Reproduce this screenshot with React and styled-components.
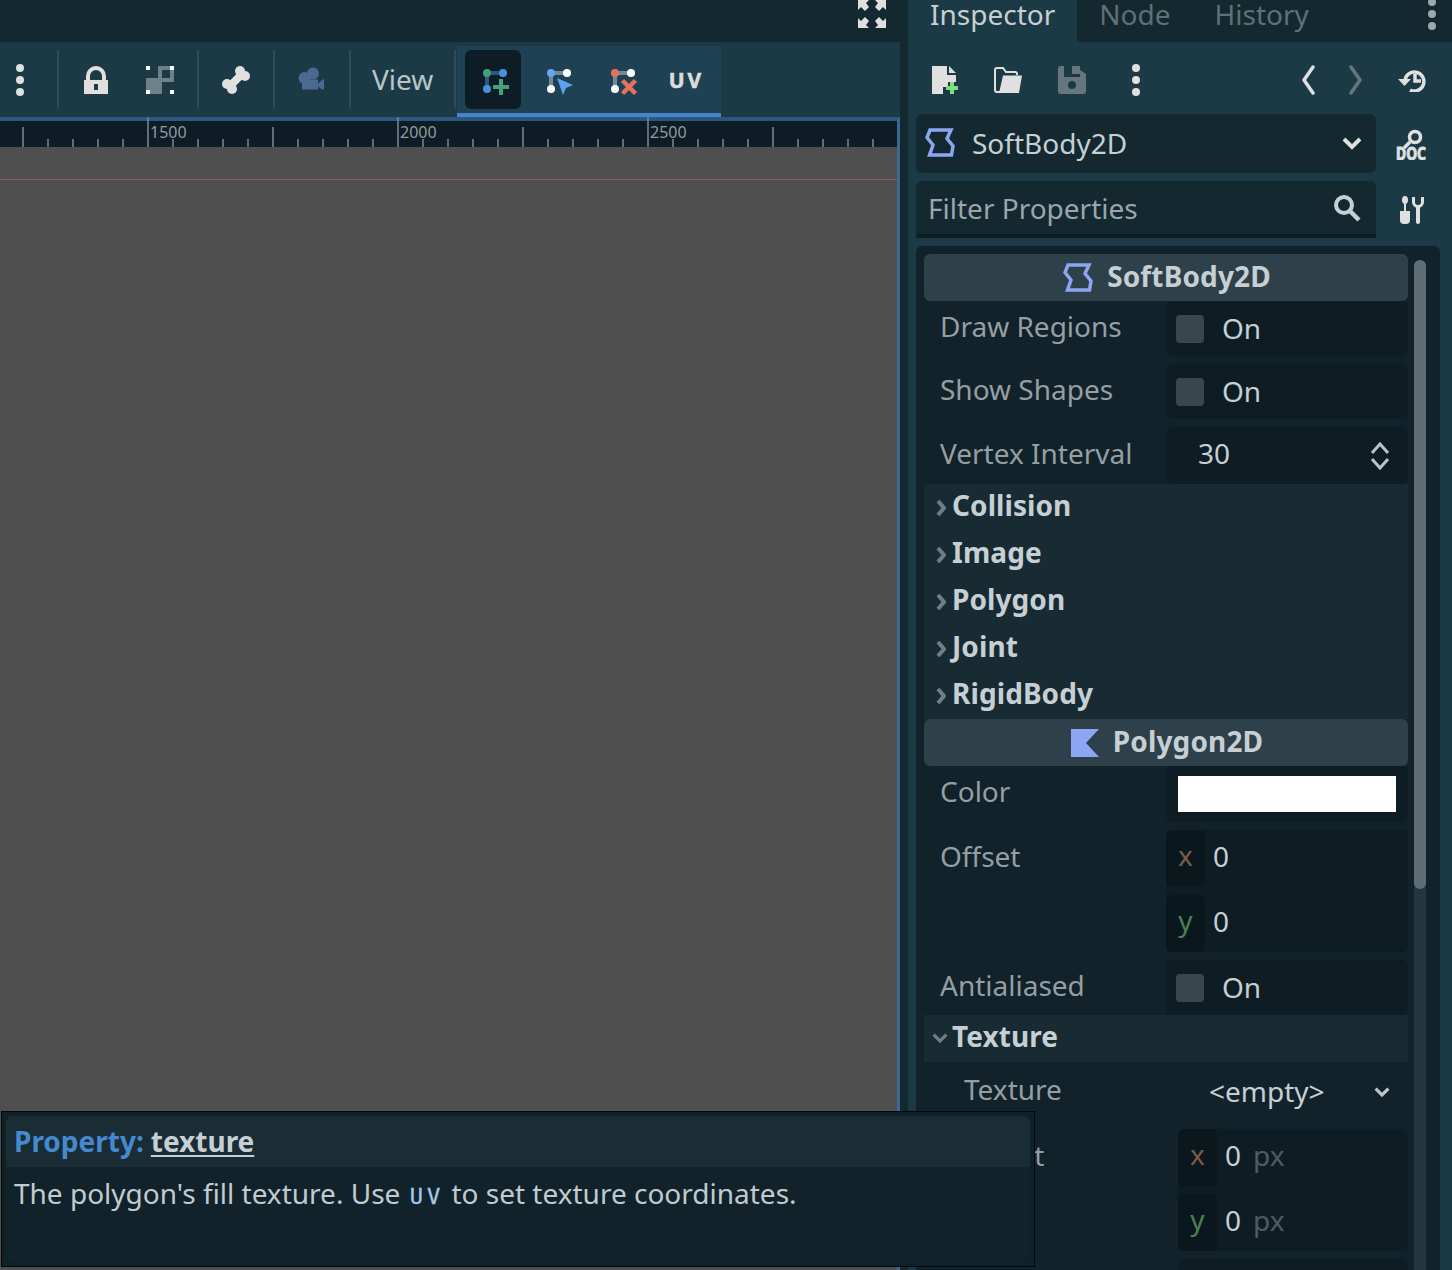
import React from 'react';
import styled, { createGlobalStyle } from 'styled-components';

const GlobalStyle = createGlobalStyle`
    html, body {
        margin: 0;
        padding: 0;
        background: #13282f;
    }
    * {
        box-sizing: border-box;
    }
`;

const Page = styled.div`
    position: relative;
    display: flex;
    width: 1452px;
    height: 1270px;
    overflow: hidden;
    background: #13282f;
    font-family: "Noto Sans", sans-serif;
    font-size: 28px;
    line-height: 1;
    color: #c6d0d4;
`;

/* left side: editor */
const Editor = styled.div`
    display: flex;
    flex-direction: column;
    width: 900px;
    flex-shrink: 0;
`;

const TopBar = styled.div`
    display: flex;
    justify-content: flex-end;
    height: 42px;
    padding-right: 14px;
    overflow: hidden;
`;

const Toolbar = styled.div`
    display: flex;
    align-items: stretch;
    height: 75px;
    background: #1b3a45;
`;

const DotsSlot = styled.div`
    display: flex;
    align-items: center;
    justify-content: center;
    width: 40px;
    margin-right: 12px;
`;

const ToolButton = styled.div`
    display: flex;
    align-items: center;
    justify-content: center;
    width: 64px;
`;

const Sep = styled.div`
    width: 2px;
    margin: 8px 5px 9px;
    background: #2b4c58;
`;

const ViewButton = styled.div`
    display: flex;
    align-items: center;
    padding: 0 16px 2px;
    width: 93px;
    color: #b9c5ca;
`;

const ModeGroup = styled.div`
    display: flex;
    gap: 8px;
    margin: 4px 0 0 -4px;
    padding: 4px 8px;
    width: 264px;
    background: #1e4254;
    border-bottom: 4px solid #4484c8;
`;

const ModeButton = styled.div`
    display: flex;
    align-items: center;
    justify-content: center;
    width: 56px;
    border-radius: 6px;
    background: ${(p) => (p.$active ? '#0e1d25' : 'transparent')};
    padding: 7px 0 0 8px;
`;

const UvLabel = styled.span`
    font-weight: 700;
    font-size: 21px;
    letter-spacing: 3px;
    color: #dcdcdc;
    -webkit-text-stroke: 0.6px #dcdcdc;
    margin: 0 5px 6px 0;
`;

const Viewport = styled.div`
    flex: 1;
    display: flex;
    flex-direction: column;
    border-top: 4px solid #2d5680;
    border-right: 3px solid #3b6792;
`;

const RulerBar = styled.div`
    height: 26px;
    flex-shrink: 0;
    background: #0e1d25;
    svg {
        display: block;
        margin-top: -4px;
    }
`;

const Canvas = styled.div`
    flex: 1;
    padding-top: 32px;
    background: #4f4f4f;
`;

const GuideLine = styled.div`
    height: 1px;
    background: #8d5963;
`;

/* right side: inspector */
const Dock = styled.div`
    display: flex;
    flex-direction: column;
    width: 544px;
    margin-left: 8px;
    background: #1b3a45;
`;

const TabBar = styled.div`
    display: flex;
    align-items: flex-start;
    height: 42px;
    background: #13282f;
`;

const Tab = styled.div`
    height: 42px;
    padding: 0 22px;
    color: ${(p) => (p.$active ? '#c6d0d4' : '#5f7077')};
    background: ${(p) => (p.$active ? '#1b3a45' : 'transparent')};
`;

const TabSpacer = styled.div`
    flex: 1;
`;

const TabMenu = styled.div`
    margin: -2px 16px 0 0;
`;

const IconBar = styled.div`
    display: flex;
    align-items: center;
    height: 72px;
    padding: 4px 0 0 4px;
`;

const IconSlot = styled.div`
    display: flex;
    align-items: center;
    justify-content: center;
    width: ${(p) => p.$w || 64}px;
    margin-left: ${(p) => p.$left || 0}px;
`;

const SearchRow = styled.div`
    display: flex;
    align-items: center;
    height: ${(p) => p.$h}px;
    padding-left: 8px;
    margin-bottom: 8px;
`;

const SearchBox = styled.div`
    display: flex;
    align-items: center;
    justify-content: space-between;
    width: 460px;
    height: 100%;
    padding: 0 ${(p) => p.$pr}px 0 ${(p) => p.$pl}px;
    border-radius: ${(p) => (p.$flat ? '6px 6px 0 0' : '6px')};
    background: #13282f;
    border-bottom: ${(p) => (p.$flat ? '4px solid #0e1e25' : 'none')};
    color: ${(p) => p.$color};
`;

const SelectName = styled.div`
    display: flex;
    align-items: center;
    gap: 17px;
    padding-bottom: 2px;
`;

const SideIcon = styled.div`
    display: flex;
    justify-content: center;
    width: 72px;
    padding-right: ${(p) => p.$pr || 0}px;
`;

const Tree = styled.div`
    display: flex;
    flex: 1;
    gap: 6px;
    margin: 0 12px 0 8px;
    padding: 8px 14px 0 8px;
    border-radius: 6px 6px 0 0;
    background: #11222a;
    overflow: hidden;
`;

const PropList = styled.div`
    display: flex;
    flex-direction: column;
    width: 484px;
    flex-shrink: 0;
`;

const ClassHeader = styled.div`
    display: flex;
    align-items: center;
    justify-content: center;
    gap: 14px;
    height: 47px;
    flex-shrink: 0;
    padding-left: 2px;
    border-radius: 6px;
    background: #2e4049;
    font-weight: 700;
    letter-spacing: 0.15px;
    color: #c6d0d4;
`;

const HeaderText = styled.span`
    margin-bottom: ${(p) => p.$lift}px;
`;

const Group = styled.div`
    display: flex;
    align-items: center;
    gap: ${(p) => (p.$open ? 4 : 6)}px;
    height: 47px;
    flex-shrink: 0;
    padding-left: ${(p) => (p.$open ? 8 : 12)}px;
    background: #182a32;
    font-weight: 700;
    letter-spacing: 0.08px;
    color: #c6d0d4;
`;

const Row = styled.div`
    display: flex;
    flex-shrink: 0;
    margin-bottom: ${(p) => (p.$last ? 0 : 8)}px;
`;

const RowLabel = styled.div`
    width: ${(p) => (p.$sub ? 254 : 242)}px;
    padding: ${(p) => p.$top || 11}px 0 0 ${(p) => (p.$sub ? 40 : 16)}px;
    color: #959fa3;
`;

const ValueBox = styled.div`
    display: flex;
    align-items: center;
    width: ${(p) => (p.$sub ? 230 : 242)}px;
    height: ${(p) => p.$h}px;
    padding-left: ${(p) => p.$pl || 0}px;
    border-radius: 6px;
    background: #0e1d24;
    color: #c6d0d4;
`;

const ValueText = styled.span`
    margin-bottom: ${(p) => p.$lift}px;
`;

const PlainValue = styled.div`
    display: flex;
    align-items: center;
    justify-content: space-between;
    width: 230px;
    height: 59px;
    padding: 0 18px 2px 31px;
    color: #c6d0d4;
    svg {
        margin-top: 4px;
    }
`;

const CheckBox = styled.div`
    width: 28px;
    height: 28px;
    margin-right: 18px;
    border-radius: 4px;
    background: #39474d;
`;

const Spinner = styled.div`
    margin-left: auto;
    margin-right: 18px;
    display: flex;
`;

const Swatch = styled.div`
    width: 218px;
    height: 36px;
    background: #ffffff;
`;

const VecBox = styled.div`
    display: flex;
    flex-direction: column;
    gap: 8px;
    width: ${(p) => (p.$sub ? 230 : 242)}px;
    border-radius: 6px;
    background: #0e1d24;
`;

const VecRow = styled.div`
    display: flex;
    align-items: center;
    height: 57px;
    gap: 8px;
    color: #c6d0d4;
`;

const AxisTag = styled.div`
    display: flex;
    align-items: center;
    justify-content: center;
    width: 39px;
    height: 57px;
    padding-bottom: 8px;
    border-radius: 6px;
    background: #0a171c;
    color: ${(p) => (p.$axis === 'x' ? '#7f5a47' : '#4b8057')};
`;

const Unit = styled.span`
    margin: 0 0 6px 4px;
    color: #4d5c62;
`;

const ScrollTrack = styled.div`
    width: 12px;
    flex-shrink: 0;
    margin-top: 6px;
    border-radius: 6px 6px 0 0;
    background: #22363f;
`;

const ScrollThumb = styled.div`
    height: 629px;
    border-radius: 6px;
    background: #5f6e74;
`;

/* tooltip */
const Tooltip = styled.div`
    position: absolute;
    left: 1px;
    top: 1111px;
    display: flex;
    flex-direction: column;
    width: 1034px;
    height: 156px;
    padding: 4px;
    border: 1px solid #030708;
    background: #0f2128;
`;

const TipHead = styled.div`
    height: 51px;
    padding: 11px 0 0 8px;
    border-radius: 6px 6px 0 0;
    background: #1a2c34;
    font-weight: 700;
`;

const TipProp = styled.span`
    color: #4589cf;
    margin-right: 7px;
`;

const TipName = styled.span`
    color: #c6d0d4;
    text-decoration: underline;
    text-decoration-thickness: 2px;
    text-underline-offset: 3px;
`;

const TipBody = styled.div`
    flex: 1;
    padding: 12px 0 0 8px;
    border-radius: 0 0 6px 6px;
    background: #11222a;
    color: #c0cbd0;
`;

const TipCode = styled.span`
    margin-left: 2px;
    font-family: "DejaVu Sans Mono", monospace;
    font-size: 22px;
    letter-spacing: 4px;
    color: #a3c9ee;
    -webkit-text-stroke: 0.3px #a3c9ee;
`;

const rulerTicks = () => {
    const lines = [];
    for (let i = 0; i < 37; i++) {
        const x = 23 + i * 25;
        let top = 22;
        if (i % 10 === 5) top = 0;
        else if (i % 5 === 0) top = 10;
        lines.push(<line key={i} x1={x} x2={x} y1={top} y2={30} stroke="#7d8a90" strokeWidth="1.5" />);
    }
    return lines;
};

const Ruler = () => (
    <RulerBar>
        <svg width="897" height="30">
            {rulerTicks()}
            {[['1500', 150], ['2000', 400], ['2500', 650]].map(([t, x]) => (
                <text key={t} x={x} y="21" fontSize="16" fill="#8f9ba0" fontFamily="Noto Sans, sans-serif">{t}</text>
            ))}
        </svg>
    </RulerBar>
);

const Dots = ({ color = '#e0e0e0' }) => (
    <svg width="8" height="32" viewBox="0 0 8 32">
        <circle cx="4" cy="4" r="4" fill={color} />
        <circle cx="4" cy="16" r="4" fill={color} />
        <circle cx="4" cy="28" r="4" fill={color} />
    </svg>
);

const LockIcon = () => (
    <svg width="28" height="28" viewBox="0 0 28 28">
        <path d="M6 16v-6a8 8 0 0 1 16 0v6" fill="none" stroke="#e0e0e0" strokeWidth="4" />
        <path d="M2 14h24v14H2z M12 18v6h4v-6z" fill="#e0e0e0" fillRule="evenodd" />
    </svg>
);

const GroupIcon = () => (
    <svg width="28" height="28" viewBox="0 0 28 28">
        <path d="M0 12h16v16H0z" fill="#6f8188" />
        <path d="M12 0h12v4H16v8H12z M24 4h4v12H16v-4h8z" fill="#6f8188" />
        <path d="M0 0h4v4H0z M24 0h4v4h-4z M0 24h4v4H0z M24 24h4v4h-4z" fill="#fff" />
    </svg>
);

const BoneIcon = () => (
    <svg width="28" height="28" viewBox="0 0 28 28" fill="#e0e0e0">
        <path d="M7 21L21 7" stroke="#e0e0e0" strokeWidth="8" />
        <circle cx="18" cy="5" r="5" />
        <circle cx="23" cy="10" r="5" />
        <circle cx="5" cy="18" r="5" />
        <circle cx="10" cy="23" r="5" />
    </svg>
);

const CameraIcon = () => (
    <svg width="28" height="28" viewBox="0 0 28 28" fill="#4a6a93">
        <g transform="translate(-1 1.500)">
            <circle cx="7.500" cy="10.500" r="6" />
            <circle cx="16" cy="6" r="6" />
            <path d="M5 12h16v10H5z" />
            <path d="M21 16l6-5v11h-2l-4-3z" />
        </g>
    </svg>
);

const PointDots = ({ a, b, c, line }) => (
    <>
        <path d="M4 20V4h16" fill="none" stroke={line} strokeWidth="4" />
        <circle cx="4" cy="4" r="4" fill={a} />
        <circle cx="20" cy="4" r="4" fill={b} />
        <circle cx="4" cy="20" r="4" fill={c} />
    </>
);

const AddPointIcon = () => (
    <svg width="28" height="28" viewBox="0 0 28 28">
        <PointDots a="#45a07a" b="#4a90e0" c="#4a90e0" line="#2c5a80" />
        <path d="M10 18h16M18 10v16" stroke="#45a07a" strokeWidth="4" fill="none" />
    </svg>
);

const MovePointIcon = () => (
    <svg width="28" height="28" viewBox="0 0 28 28">
        <PointDots a="#65a5f5" b="#fff" c="#fff" line="#6f8b97" />
        <path d="M10 9l16 7-7 3-3 7z" fill="#5ea0ef" />
    </svg>
);

const RemovePointIcon = () => (
    <svg width="28" height="28" viewBox="0 0 28 28">
        <PointDots a="#e8705f" b="#fff" c="#fff" line="#6f8b97" />
        <path d="M11.500 11.500l13 13M24.500 11.500l-13 13" stroke="#e8705f" strokeWidth="4.500" fill="none" />
    </svg>
);

const FullscreenIcon = () => (
    <svg width="28" height="28" viewBox="0 0 28 28" fill="#e0e0e0">
        <path d="M0 0h11L8 3l3 4-4 4-4-4-3 3z" />
        <path d="M28 0H17l3 3-3 4 4 4 4-4 3 3z" />
        <path d="M0 28h11l-3-3 3-4-4-4-4 4-3-3z" />
        <path d="M28 28H17l3-3-3-4 4-4 4 4 3-3z" />
    </svg>
);

const NewFileIcon = () => (
    <svg width="28" height="28" viewBox="0 0 28 28">
        <g transform="translate(2 0)">
            <path d="M0 0h15v9h9v7h-8v5h-5v7H0z" fill="#e0e0e0" />
            <path d="M17 0l7 7h-7z" fill="#e0e0e0" />
            <path d="M14 22h12M20 16v12" stroke="#7de07e" strokeWidth="4" fill="none" />
        </g>
    </svg>
);

const FolderIcon = () => (
    <svg width="28" height="26" viewBox="0 0 28 26" fill="none">
        <path d="M8 25H3a2 2 0 0 1-2-2V3a2 2 0 0 1 2-2h6l3 4h9a2 2 0 0 1 2 2v1" stroke="#e0e0e0" strokeWidth="2" />
        <path d="M9 8.500h19l-3 17.500H5z" fill="#e0e0e0" />
    </svg>
);

const SaveIcon = () => (
    <svg width="28" height="28" viewBox="0 0 28 28">
        <path d="M3 0h3v11h16V4l6 4v17a3 3 0 0 1-3 3H3a3 3 0 0 1-3-3V3a3 3 0 0 1 3-3z M14 15a4 4 0 1 0 0 8a4 4 0 0 0 0-8z" fill="#66767c" fillRule="evenodd" />
        <path d="M14 0h8v8h-8z" fill="#66767c" />
    </svg>
);

const ChevronIcon = ({ dir, color }) => (
    <svg width="14" height="30" viewBox="0 0 14 30">
        <path d={dir === 'left' ? 'M12 2L3 15l9 13' : 'M2 2l9 13-9 13'} fill="none" stroke={color} strokeWidth="3.500" strokeLinecap="round" strokeLinejoin="round" />
    </svg>
);

const HistoryIcon = () => (
    <svg width="28" height="24" viewBox="0 0 28 24" fill="none">
        <path d="M7 12a9.500 9.500 0 1 1 5 10" stroke="#e0e0e0" strokeWidth="3.500" />
        <path d="M0 11h13l-6.500 7z" fill="#e0e0e0" />
        <path d="M17 6v7h6" stroke="#e0e0e0" strokeWidth="3.500" />
    </svg>
);

const DocIcon = () => (
    <svg width="30" height="32" viewBox="0 0 30 32">
        <circle cx="19" cy="9" r="5.500" fill="none" stroke="#e0e0e0" strokeWidth="3.500" />
        <path d="M14 14l-6 6" stroke="#e0e0e0" strokeWidth="3.500" />
        <text x="0" y="32" fontSize="17" fontWeight="700" fontFamily="Noto Sans, sans-serif" fill="#e0e0e0" stroke="#e0e0e0" strokeWidth="0.9" textLength="30" lengthAdjust="spacingAndGlyphs">DOC</text>
    </svg>
);

const ToolsIcon = () => (
    <svg width="24" height="28" viewBox="0 0 24 28" fill="#e0e0e0">
        <ellipse cx="5" cy="4" rx="3" ry="4" />
        <path d="M4 6h2v9H4z" />
        <path d="M0 15h10v9a4 4 0 0 1-4 4H4a4 4 0 0 1-4-4z" />
        <path d="M13.500 1v5a4.500 4.500 0 0 0 9 0V1" fill="none" stroke="#e0e0e0" strokeWidth="3" />
        <path d="M16 9h4v17a2 2 0 0 1-4 0z" />
    </svg>
);

const SearchIcon = () => (
    <svg width="28" height="28" viewBox="0 0 28 28" fill="none" stroke="#c6d0d4">
        <circle cx="11" cy="11" r="8" strokeWidth="4" />
        <path d="M17 17l9 9" strokeWidth="4.500" />
    </svg>
);

const DownIcon = ({ size = 20, color = '#e0e0e0' }) => (
    <svg width={size} height={size * 0.65} viewBox="0 0 20 13" fill="none">
        <path d="M2 2l8 8 8-8" stroke={color} strokeWidth="4" />
    </svg>
);

const RightIcon = () => (
    <svg width="10" height="16" viewBox="0 0 10 16" fill="none">
        <path d="M2 1l6 7-6 7" stroke="#6f7e84" strokeWidth="4" />
    </svg>
);

const SpinIcon = () => (
    <svg width="20" height="28" viewBox="0 0 20 28" fill="none" stroke="#b9c5ca" strokeWidth="3">
        <path d="M2 11l8-9 8 9" />
        <path d="M2 17l8 9 8-9" />
    </svg>
);

const SoftBodyIcon = () => (
    <svg width="30" height="30" viewBox="0 0 30 30" fill="none">
        <path d="M5 2H26L22 10.500 28 18 26.500 27H4.500L8 17 2 9.500z" stroke="#8da5f3" strokeWidth="3.500" />
    </svg>
);

const PolygonIcon = () => (
    <svg width="28" height="28" viewBox="0 0 28 28">
        <path d="M0 0h28l-13 14 13 14H0z" fill="#8da5f3" />
    </svg>
);

const CheckRow = ({ label, last }) => (
    <Row $last={last}>
        <RowLabel>{label}</RowLabel>
        <ValueBox $h={55} $pl={10}>
            <CheckBox />
            <ValueText $lift={2}>On</ValueText>
        </ValueBox>
    </Row>
);

const GROUPS = ['Collision', 'Image', 'Polygon', 'Joint', 'RigidBody'];

const VectorRow = ({ label, sub, unit }) => (
    <Row>
        <RowLabel $sub={sub} $top={12}>{label}</RowLabel>
        <VecBox $sub={sub}>
            {['x', 'y'].map((axis) => (
                <VecRow key={axis}>
                    <AxisTag $axis={axis}>{axis}</AxisTag>
                    <ValueText $lift={6}>0</ValueText>
                    {unit && <Unit>{unit}</Unit>}
                </VecRow>
            ))}
        </VecBox>
    </Row>
);

const App = () => (
    <Page>
        <GlobalStyle />
        <Editor>
            <TopBar>
                <FullscreenIcon />
            </TopBar>
            <Toolbar>
                <DotsSlot><Dots /></DotsSlot>
                <Sep />
                <ToolButton><LockIcon /></ToolButton>
                <ToolButton><GroupIcon /></ToolButton>
                <Sep />
                <ToolButton><BoneIcon /></ToolButton>
                <Sep />
                <ToolButton><CameraIcon /></ToolButton>
                <Sep />
                <ViewButton>View</ViewButton>
                <Sep />
                <ModeGroup>
                    <ModeButton $active><AddPointIcon /></ModeButton>
                    <ModeButton><MovePointIcon /></ModeButton>
                    <ModeButton><RemovePointIcon /></ModeButton>
                    <ModeButton><UvLabel>UV</UvLabel></ModeButton>
                </ModeGroup>
            </Toolbar>
            <Viewport>
                <Ruler />
                <Canvas><GuideLine /></Canvas>
            </Viewport>
        </Editor>

        <Dock>
            <TabBar>
                <Tab $active>Inspector</Tab>
                <Tab>Node</Tab>
                <Tab>History</Tab>
                <TabSpacer />
                <TabMenu><Dots color="#9ba8ad" /></TabMenu>
            </TabBar>
            <IconBar>
                <IconSlot><NewFileIcon /></IconSlot>
                <IconSlot><FolderIcon /></IconSlot>
                <IconSlot><SaveIcon /></IconSlot>
                <IconSlot><Dots /></IconSlot>
                <IconSlot $w={48} $left={116}><ChevronIcon dir="left" color="#e0e0e0" /></IconSlot>
                <IconSlot $w={48}><ChevronIcon dir="right" color="#66767c" /></IconSlot>
                <IconSlot><HistoryIcon /></IconSlot>
            </IconBar>
            <SearchRow $h={59}>
                <SearchBox $pl={9} $pr={14} $color="#c6d0d4">
                    <SelectName><SoftBodyIcon />SoftBody2D</SelectName>
                    <DownIcon />
                </SearchBox>
                <SideIcon $pr={2}><DocIcon /></SideIcon>
            </SearchRow>
            <SearchRow $h={57}>
                <SearchBox $flat $pl={12} $pr={15} $color="#9aa6ab">
                    <span>Filter Properties</span>
                    <SearchIcon />
                </SearchBox>
                <SideIcon><ToolsIcon /></SideIcon>
            </SearchRow>
            <Tree>
                <PropList>
                    <ClassHeader><SoftBodyIcon /><HeaderText $lift={4}>SoftBody2D</HeaderText></ClassHeader>
                    <CheckRow label="Draw Regions" />
                    <CheckRow label="Show Shapes" />
                    <Row $last>
                        <RowLabel $top={12}>Vertex Interval</RowLabel>
                        <ValueBox $h={57} $pl={32}>
                            <ValueText $lift={5}>30</ValueText>
                            <Spinner><SpinIcon /></Spinner>
                        </ValueBox>
                    </Row>
                    {GROUPS.map((g) => (
                        <Group key={g}><RightIcon /><HeaderText $lift={5}>{g}</HeaderText></Group>
                    ))}
                    <ClassHeader><PolygonIcon /><HeaderText $lift={4}>Polygon2D</HeaderText></ClassHeader>
                    <Row>
                        <RowLabel>Color</RowLabel>
                        <ValueBox $h={56} $pl={12}><Swatch /></ValueBox>
                    </Row>
                    <VectorRow label="Offset" />
                    <CheckRow label="Antialiased" last />
                    <Group $open><DownIcon size={16} color="#6f7e84" /><HeaderText $lift={5}>Texture</HeaderText></Group>
                    <Row>
                        <RowLabel $sub $top={13}>Texture</RowLabel>
                        <PlainValue>
                            &lt;empty&gt;
                            <DownIcon size={16} color="#b9c5ca" />
                        </PlainValue>
                    </Row>
                    <VectorRow label="Offset" sub unit="px" />
                    <Row>
                        <RowLabel $sub />
                        <VecBox $sub><VecRow /></VecBox>
                    </Row>
                </PropList>
                <ScrollTrack><ScrollThumb /></ScrollTrack>
            </Tree>
        </Dock>

        <Tooltip>
            <TipHead>
                <TipProp>Property:</TipProp>
                <TipName>texture</TipName>
            </TipHead>
            <TipBody>
                The polygon's fill texture. Use <TipCode>UV</TipCode> to set texture coordinates.
            </TipBody>
        </Tooltip>
    </Page>
);

export default App;
